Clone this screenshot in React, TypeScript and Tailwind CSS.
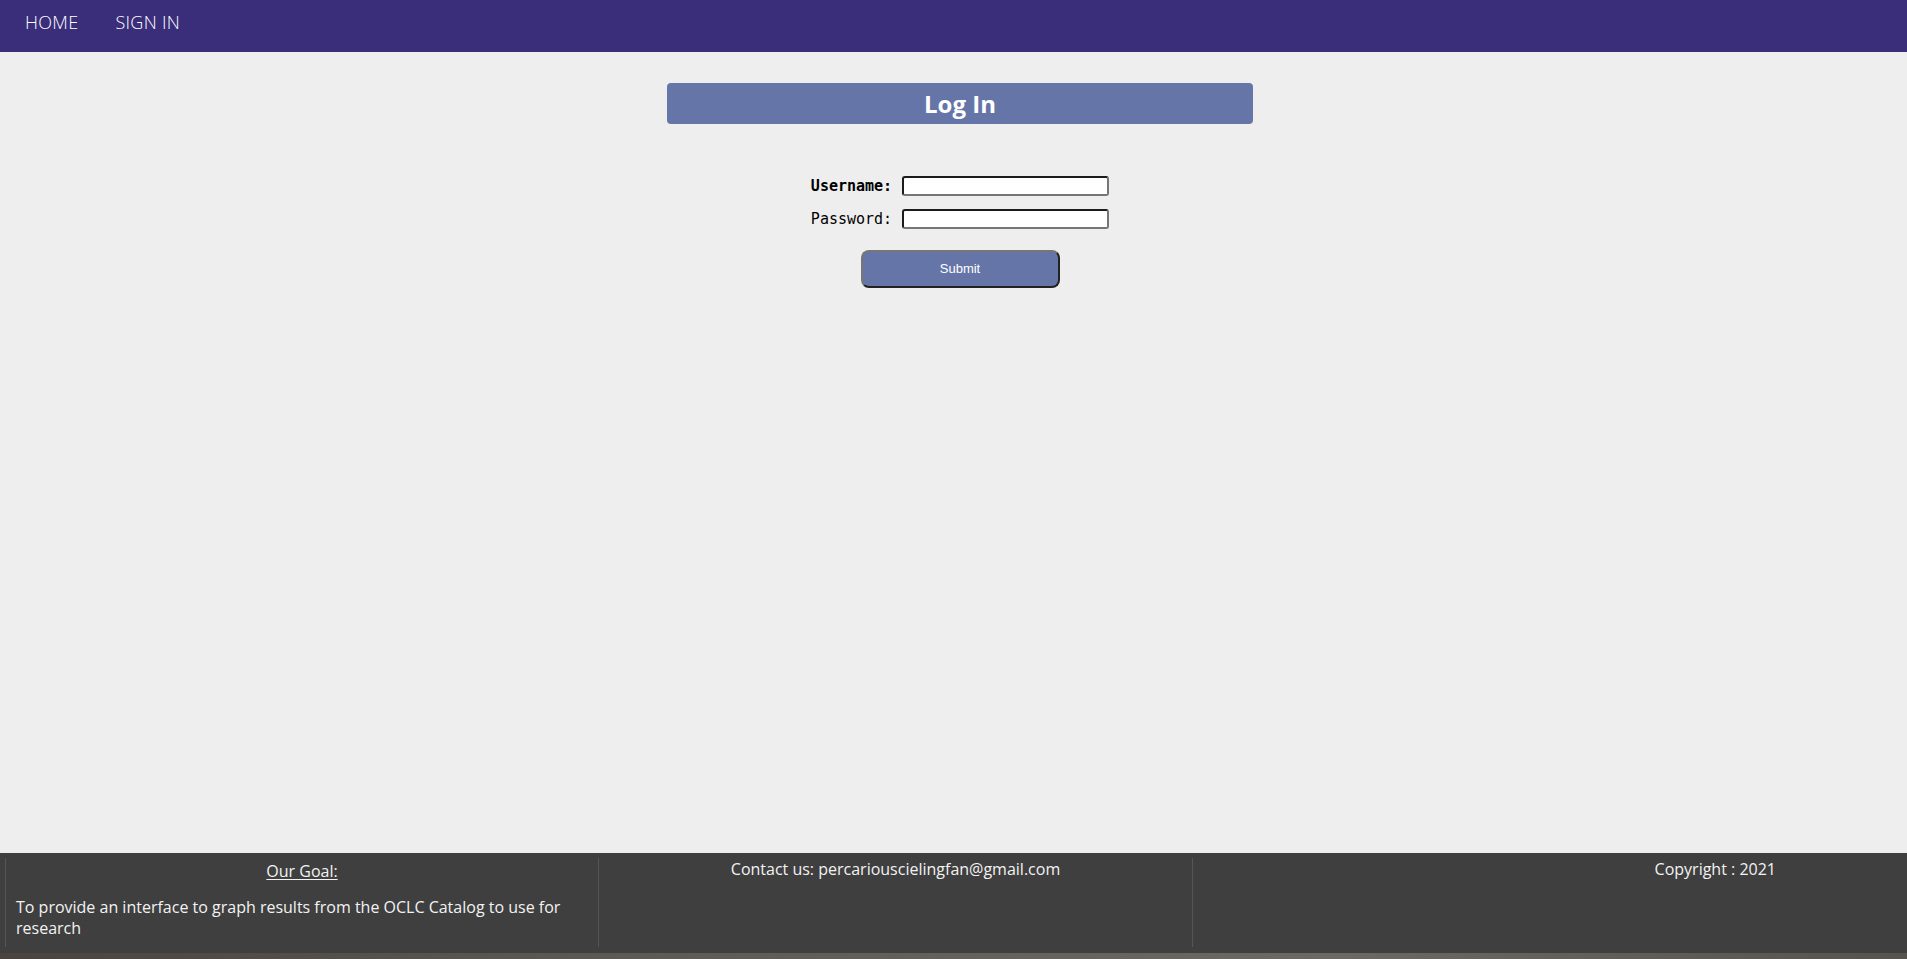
const navItems = ['HOME', 'SIGN IN'];

export default function App() {
  return (
    <div className="h-screen flex flex-col bg-[#eeeeee] font-['Open_Sans','Noto_Sans',sans-serif]">
      <nav className="h-[52px] shrink-0 bg-[#3a2e7b] flex items-start pt-[13px] pl-[25px] gap-[37px]">
        {navItems.map((n) => (
          <a key={n} className="text-[18px] font-light text-white tracking-[0.3px] leading-none">
            {n}
          </a>
        ))}
      </nav>

      <main className="flex-1 flex flex-col items-center pl-[13px]">
        <h1 className="mt-[31px] w-[586px] h-[41px] rounded-[4px] bg-[#6675a8] text-white text-[24px] font-bold flex items-center justify-center">
          Log In
        </h1>

        <form className="mt-[52px] flex flex-col items-center" onSubmit={(e) => e.preventDefault()}>
          <div className="flex flex-col gap-[13px] font-['DejaVu_Sans_Mono',monospace] text-[15px] leading-[20px] text-black">
            <label className="flex items-center gap-[10px] h-[20px]">
              <span className="font-bold">Username:</span>
              <input className="w-[207px] h-[20px] bg-white rounded-[3px] border-2 border-t-[#1b1b1b] border-l-[#1b1b1b] border-r-[#767676] border-b-[#767676] outline-none" />
            </label>
            <label className="flex items-center gap-[10px] h-[20px]">
              <span>Password:</span>
              <input type="password" className="w-[207px] h-[20px] bg-white rounded-[3px] border-2 border-t-[#1b1b1b] border-l-[#1b1b1b] border-r-[#767676] border-b-[#767676] outline-none" />
            </label>
          </div>
          <button
            type="submit"
            className="mt-[21px] w-[199px] h-[38px] rounded-[8px] bg-[#6675a8] text-white text-[13px] font-['Liberation_Sans',Arial,sans-serif] border-2 border-t-[#767676] border-l-[#767676] border-r-[#222] border-b-[#222]"
          >
            Submit
          </button>
        </form>
      </main>

      <footer className="h-[100px] shrink-0 bg-[#3f3f3f] text-[#f2f2f2] text-[16px] flex pt-[5px] pb-[6px] pl-[5px]">
        <div className="w-[594px] border-l border-r border-[#555] px-[10px]">
          <p className="text-center underline underline-offset-2 leading-[21px] mt-[3px]">Our Goal:</p>
          <p className="mt-[15px] leading-[21px]">
            To provide an interface to graph results from the OCLC Catalog to use for research
          </p>
        </div>
        <div className="w-[594px] border-r border-[#555] pt-[1px]">
          <p className="text-center leading-[21px]">Contact us: percariouscielingfan@gmail.com</p>
        </div>
        <div className="flex-1 text-right pr-[131px] pt-[1px]">
          <p className="leading-[21px]">Copyright : 2021</p>
        </div>
      </footer>
      <div className="h-[6px] shrink-0 bg-[linear-gradient(90deg,#4a4440_0%,#5e5b55_35%,#6a6963_70%,#57534d_100%)]" />
    </div>
  );
}
